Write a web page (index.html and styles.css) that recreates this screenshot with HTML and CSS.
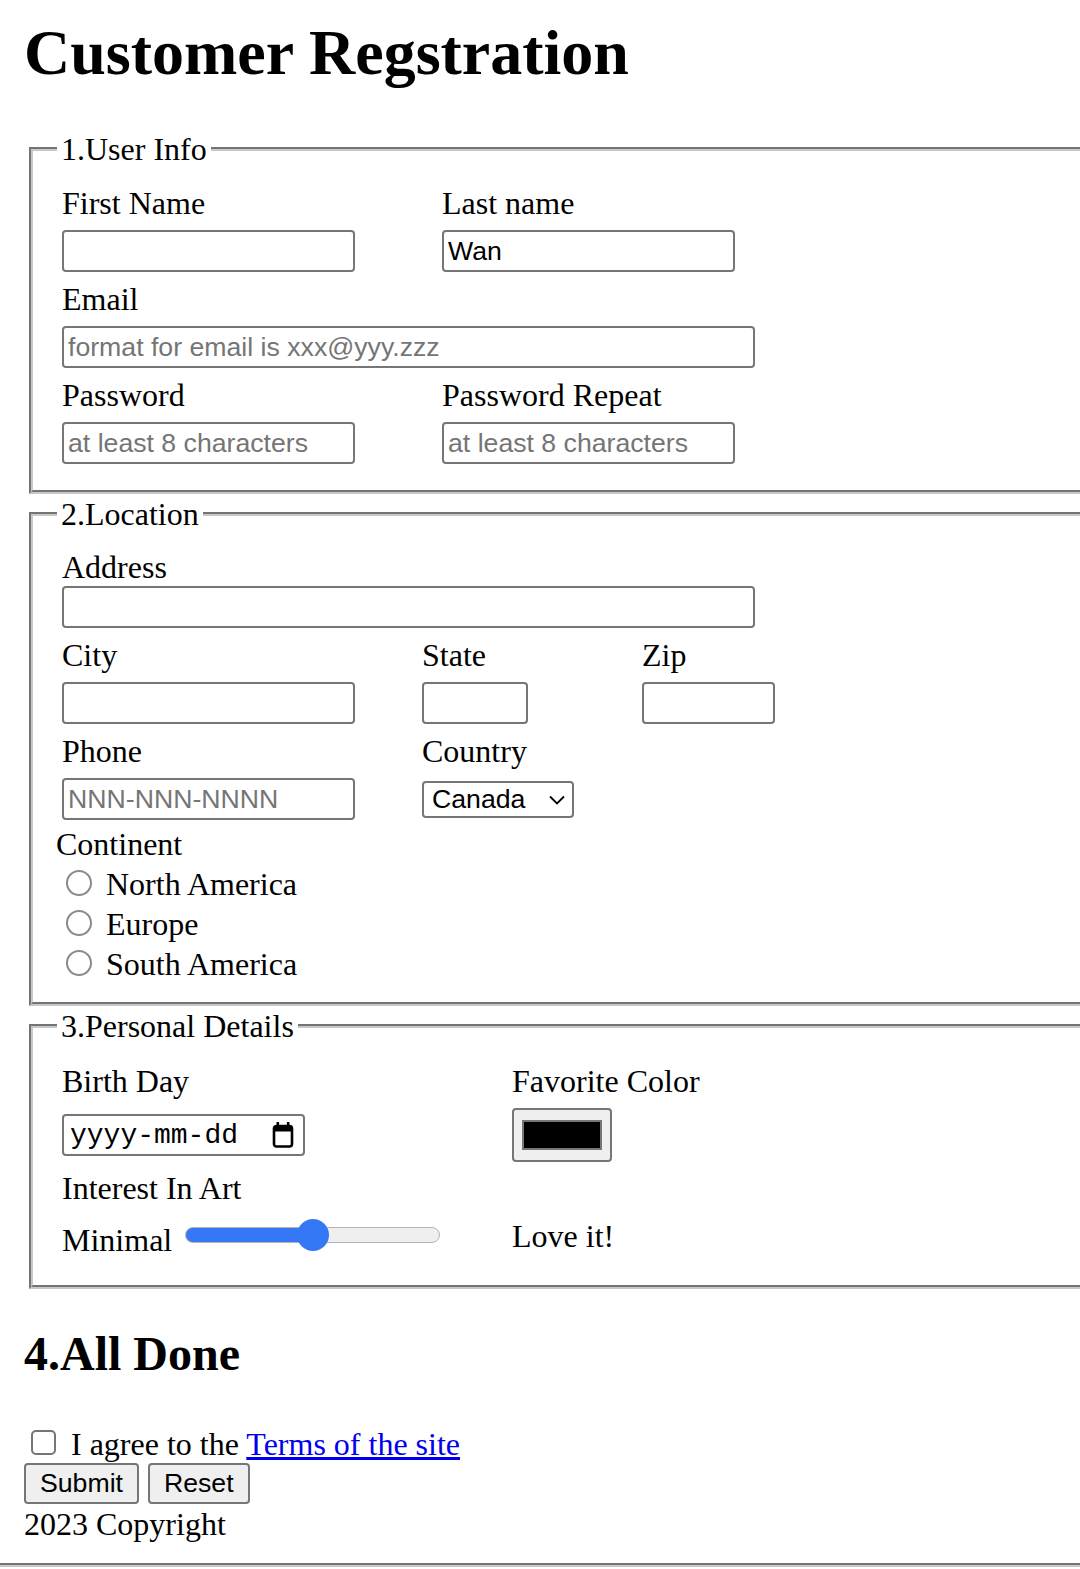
FILE: index.html
```html
<!DOCTYPE html>
<html lang="en">
<head>
<meta charset="utf-8">
<title>Customer Regstration</title>
<link rel="stylesheet" href="styles.css">
</head>
<body>
<main class="page">
  <h1 class="title">Customer Regstration</h1>
  <form class="form">
    <fieldset class="section section-user">
      <legend class="legend">1.User Info</legend>
      <div class="grid grid-user">
        <div class="field">
          <label class="label" for="first">First Name</label>
          <div class="control"><input class="text w-md" id="first" type="text"></div>
        </div>
        <div class="field">
          <label class="label" for="last">Last name</label>
          <div class="control"><input class="text w-md" id="last" type="text" value="Wan"></div>
        </div>
        <div class="field span-all">
          <label class="label" for="email">Email</label>
          <div class="control"><input class="text w-lg" id="email" type="email" placeholder="format for email is xxx@yyy.zzz"></div>
        </div>
        <div class="field">
          <label class="label" for="pw">Password</label>
          <div class="control"><input class="text w-md" id="pw" type="password" placeholder="at least 8 characters"></div>
        </div>
        <div class="field">
          <label class="label" for="pw2">Password Repeat</label>
          <div class="control"><input class="text w-md" id="pw2" type="password" placeholder="at least 8 characters"></div>
        </div>
      </div>
    </fieldset>

    <fieldset class="section section-location">
      <legend class="legend">2.Location</legend>
      <div class="grid grid-loc">
        <div class="field span-all">
          <label class="label" for="addr">Address</label>
          <div class="control control-tight"><input class="text w-lg" id="addr" type="text"></div>
        </div>
        <div class="field">
          <label class="label" for="city">City</label>
          <div class="control"><input class="text w-md" id="city" type="text"></div>
        </div>
        <div class="field">
          <label class="label" for="state">State</label>
          <div class="control"><input class="text w-state" id="state" type="text"></div>
        </div>
        <div class="field">
          <label class="label" for="zip">Zip</label>
          <div class="control"><input class="text w-zip" id="zip" type="text"></div>
        </div>
        <div class="field">
          <label class="label" for="phone">Phone</label>
          <div class="control"><input class="text w-md" id="phone" type="tel" placeholder="NNN-NNN-NNNN"></div>
        </div>
        <div class="field">
          <label class="label" for="country">Country</label>
          <div class="control">
            <span class="select-wrap">
              <select class="select" id="country">
                <option>Canada</option>
                <option>USA</option>
                <option>Mexico</option>
              </select>
              <svg class="chevron" width="16" height="10" viewBox="0 0 16 10" aria-hidden="true"><path d="M1 1.5 L8 8.5 L15 1.5" fill="none" stroke="#000" stroke-width="1.8"/></svg>
            </span>
          </div>
        </div>
      </div>
      <div class="continent">
        <div class="label">Continent</div>
        <div class="radio-list">
          <label class="radio-line"><input class="radio" type="radio" name="continent"> North America</label>
          <label class="radio-line"><input class="radio" type="radio" name="continent"> Europe</label>
          <label class="radio-line"><input class="radio" type="radio" name="continent"> South America</label>
        </div>
      </div>
    </fieldset>

    <fieldset class="section section-personal">
      <legend class="legend">3.Personal Details</legend>
      <div class="grid grid-personal">
        <div class="field">
          <label class="label" for="bday">Birth Day</label>
          <div class="control control-tall">
            <span class="date">
              <input class="date-field" id="bday" type="text" value="yyyy-mm-dd" readonly>
              <svg class="cal" width="22" height="26" viewBox="0 0 22 26" aria-hidden="true">
                <rect x="4.5" y="0" width="2.6" height="5" fill="#000"/>
                <rect x="14.9" y="0" width="2.6" height="5" fill="#000"/>
                <rect x="2" y="4" width="18" height="20.5" rx="2.5" fill="none" stroke="#000" stroke-width="2.6"/>
                <rect x="2" y="4" width="18" height="5.5" fill="#000"/>
              </svg>
            </span>
          </div>
        </div>
        <div class="field">
          <label class="label" for="fav">Favorite Color</label>
          <div class="control control-tall"><input class="color" id="fav" type="color" value="#000000"></div>
        </div>
        <div class="field span-all interest">
          <label class="label" for="art">Interest In Art</label>
        </div>
        <div class="range-row">
          <span class="range-min">Minimal</span>
          <input class="range" id="art" type="range" min="0" max="100" value="50">
        </div>
        <div class="range-max">Love it!</div>
      </div>
    </fieldset>
  </form>

  <h2 class="done">4.All Done</h2>
  <p class="agree"><input class="check" type="checkbox" id="agree"> <label for="agree">I agree to the</label> <a class="link" href="#">Terms of the site</a></p>
  <div class="actions">
    <button class="btn" type="submit">Submit</button>
    <button class="btn" type="reset">Reset</button>
  </div>
  <p class="copyright">2023 Copyright</p>
</main>
<hr class="rule">
</body>
</html>
```

FILE: styles.css
```css
html {
  overflow-x: hidden;
}

body {
  margin: 0;
  background: #fff;
  color: #000;
  font-family: "Liberation Serif", "Times New Roman", serif;
  font-size: 32px;
  line-height: 36px;
}

.page {
  padding: 16px 24px 0;
}

.title {
  margin: 0;
  font-size: 64px;
  line-height: 74px;
  font-weight: bold;
}

.form {
  margin: 0;
}

.section {
  margin: 0 -200px 0 5px;
  border: 4px groove #c8c8c8;
  padding: 18px 24px 26px;
  min-width: 0;
}

.section-user {
  margin-top: 41px;
}

.section-location {
  margin-top: 2px;
  padding-top: 17px;
  padding-bottom: 18px;
}

.section-personal {
  margin-top: 2px;
  padding-top: 19px;
  padding-bottom: 27px;
}

.legend {
  padding: 0 4px;
  font-size: 32px;
  line-height: 36px;
}

.grid {
  margin-left: 5px;
  display: grid;
  row-gap: 9px;
}

.grid-user {
  grid-template-columns: 380px 1fr;
}

.grid-loc {
  grid-template-columns: 360px 220px 1fr;
}

.grid-personal {
  grid-template-columns: 450px 1fr;
  row-gap: 0;
}

.span-all {
  grid-column: 1 / -1;
}

.label {
  display: block;
  font-size: 32px;
  line-height: 36px;
}

.control {
  display: flex;
  align-items: center;
  height: 42px;
  margin-top: 9px;
}

.control-tight {
  margin-top: 1px;
}

.control-tall {
  height: 54px;
}

.text {
  box-sizing: border-box;
  height: 42px;
  margin: 0;
  padding: 0 4px;
  border: 2px solid #767676;
  border-radius: 4px;
  background: #fff;
  color: #000;
  font-family: "Liberation Sans", Arial, sans-serif;
  font-size: 26.67px;
}

.text::placeholder {
  color: #757575;
  opacity: 1;
}

.w-md {
  width: 293px;
}

.w-lg {
  width: 693px;
}

.w-state {
  width: 106px;
}

.w-zip {
  width: 133px;
}

.select-wrap {
  position: relative;
  display: inline-flex;
}

.select {
  -webkit-appearance: none;
  appearance: none;
  box-sizing: border-box;
  width: 152px;
  height: 37px;
  margin: 0;
  padding: 0 0 0 8px;
  border: 2px solid #767676;
  border-radius: 4px;
  background: #fff;
  color: #000;
  font-family: "Liberation Sans", Arial, sans-serif;
  font-size: 26.67px;
}

.chevron {
  position: absolute;
  right: 9px;
  top: 14px;
  pointer-events: none;
}

.continent {
  margin-top: 6px;
  margin-left: -1px;
}

.radio-list {
  margin-top: 2px;
}

.radio-line {
  display: block;
  line-height: 40px;
}

.radio {
  -webkit-appearance: none;
  appearance: none;
  box-sizing: border-box;
  width: 26px;
  height: 26px;
  margin: 0 6px 0 10px;
  border: 2px solid #8a8a8a;
  border-radius: 50%;
  background: #fff;
  vertical-align: -1px;
}

.date {
  box-sizing: border-box;
  display: flex;
  align-items: center;
  justify-content: space-between;
  width: 243px;
  height: 42px;
  padding: 0 9px 0 6px;
  border: 2px solid #767676;
  border-radius: 4px;
  background: #fff;
}

.date-field {
  width: 172px;
  margin: 0;
  padding: 0;
  border: 0;
  outline: none;
  background: transparent;
  color: #000;
  font-family: "Liberation Mono", "Courier New", monospace;
  font-size: 28px;
}

.cal {
  display: block;
}

.color {
  box-sizing: border-box;
  width: 100px;
  height: 54px;
  margin: 0;
  padding: 2px 4px;
  border: 2px solid #767676;
  border-radius: 4px;
  background: #efefef;
}

.color::-webkit-color-swatch-wrapper {
  padding: 8px 4px;
}

.color::-webkit-color-swatch {
  border: 2px solid #777;
  border-radius: 0;
}

.interest {
  margin-top: 8px;
}

.range-row {
  display: flex;
  align-items: flex-start;
  margin-top: 12px;
}

.range-min {
  margin-top: 4px;
}

.range-max {
  margin-top: 12px;
}

.range {
  -webkit-appearance: none;
  appearance: none;
  width: 255px;
  height: 32px;
  margin: 1px 0 0 13px;
  padding: 0;
  background: transparent;
}

.range::-webkit-slider-runnable-track {
  box-sizing: border-box;
  height: 16px;
  border: 1px solid #b4b4b4;
  border-radius: 8px;
  background: linear-gradient(to right, #3478f6 0 50%, #efefef 50% 100%);
}

.range::-webkit-slider-thumb {
  -webkit-appearance: none;
  appearance: none;
  width: 32px;
  height: 32px;
  margin-top: -9px;
  border: 0;
  border-radius: 50%;
  background: #3478f6;
}

.done {
  margin: 37px 0 0;
  font-size: 48px;
  line-height: 55px;
  font-weight: bold;
}

.agree {
  margin: 45px 0 0;
  line-height: 36px;
}

.check {
  -webkit-appearance: none;
  appearance: none;
  box-sizing: border-box;
  width: 25px;
  height: 25px;
  margin: 0 7px 0 7px;
  border: 2px solid #767676;
  border-radius: 5px;
  background: #fff;
  vertical-align: 0;
}

.link {
  color: #0000ee;
  text-decoration: underline;
}

.actions {
  display: flex;
  gap: 9px;
  margin-top: 1px;
}

.btn {
  box-sizing: border-box;
  height: 41px;
  margin: 0;
  padding: 0 14px;
  border: 2px solid #767676;
  border-radius: 4px;
  background: #efefef;
  color: #000;
  font-family: "Liberation Sans", Arial, sans-serif;
  font-size: 26.67px;
}

.copyright {
  margin: 2px 0 0;
  line-height: 36px;
}

.rule {
  height: 0;
  margin: 21px 0 0;
  border: 0;
  border-top: 4px groove #c8c8c8;
}
```
